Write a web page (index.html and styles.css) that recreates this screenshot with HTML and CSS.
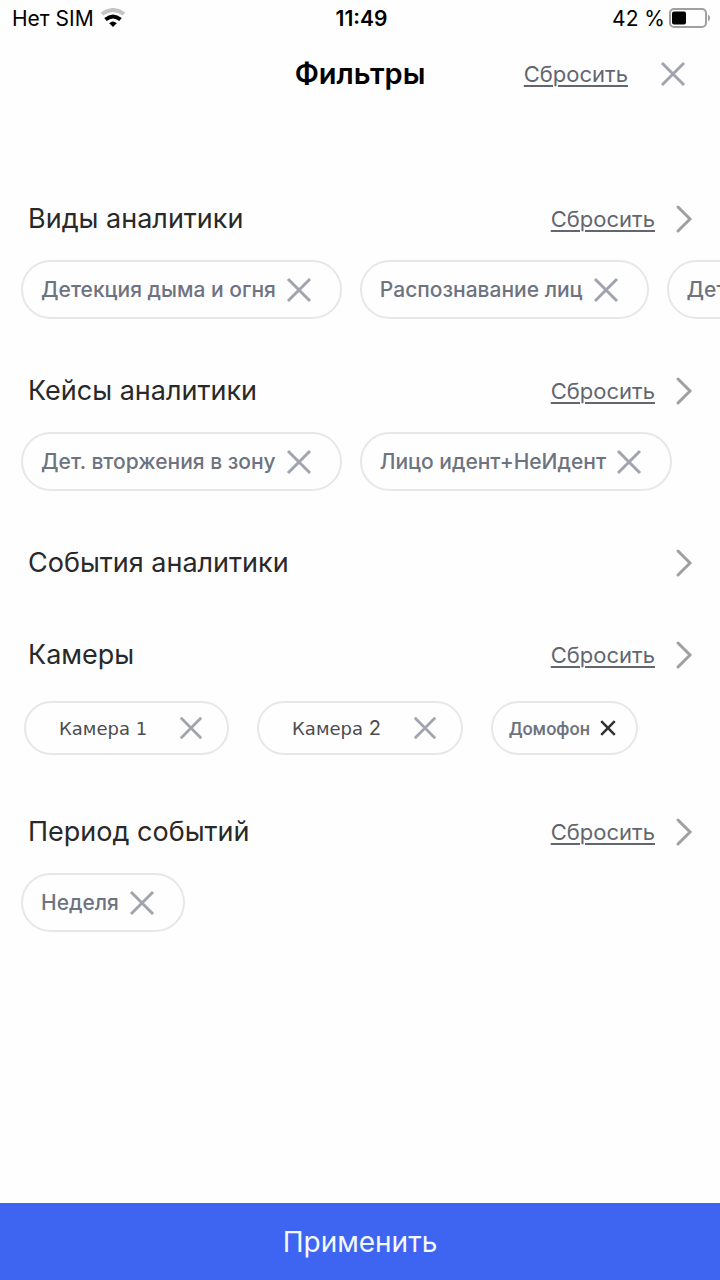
FILE: index.html
```html
<!DOCTYPE html>
<html lang="ru">
<head>
<meta charset="utf-8">
<meta name="viewport" content="width=device-width, initial-scale=1">
<title>Фильтры</title>
<link rel="stylesheet" href="styles.css">
</head>
<body>
<svg class="defs" aria-hidden="true">
  <symbol id="cross" viewBox="0 0 26 26"><path d="M2 2 24 24M24 2 2 24"/></symbol>
  <symbol id="chevron" viewBox="0 0 18 30"><path d="M3 3 15 15 3 27"/></symbol>
</svg>
<div class="screen">
  <div class="status">
    <div class="carrier"><span>Нет SIM</span>
      <svg class="wifi" viewBox="0 0 26 20"><path class="wifi-off" d="M2 6Q13-2 24 6"/><path class="wifi-on" d="M5.500 11.500Q13 5.500 20.500 11.500"/><path d="M13 19 9.200 15.200Q13 12 16.800 15.200Z"/></svg>
    </div>
    <time class="clock">11:49</time>
    <div class="power"><span>42 %</span>
      <svg class="battery" viewBox="0 0 42 20"><rect class="battery-case" x="1" y="1" width="36" height="18" rx="4"/><rect x="3" y="3.500" width="14" height="13" rx="2"/><path class="battery-tip" d="M39 7Q41 7 41 10T39 13Z"/></svg>
    </div>
  </div>
  <header class="topbar">
    <h1 class="title">Фильтры</h1>
    <div class="actions">
      <button class="reset" type="button">Сбросить</button>
      <button class="icon-button" type="button" aria-label="Закрыть"><svg class="cross"><use href="#cross"/></svg></button>
    </div>
  </header>
  <main class="filters">
    <section>
      <div class="heading"><h2>Виды аналитики</h2><button class="reset" type="button">Сбросить</button><button class="icon-button" type="button" aria-label="Открыть виды аналитики"><svg class="chevron"><use href="#chevron"/></svg></button></div>
      <div class="chips">
        <button class="chip" type="button">Детекция дыма и огня<svg class="cross"><use href="#cross"/></svg></button>
        <button class="chip" type="button">Распознавание лиц<svg class="cross"><use href="#cross"/></svg></button>
        <button class="chip" type="button">Детекция<svg class="cross"><use href="#cross"/></svg></button>
      </div>
    </section>
    <section>
      <div class="heading"><h2>Кейсы аналитики</h2><button class="reset" type="button">Сбросить</button><button class="icon-button" type="button" aria-label="Открыть кейсы аналитики"><svg class="chevron"><use href="#chevron"/></svg></button></div>
      <div class="chips">
        <button class="chip" type="button">Дет. вторжения в зону<svg class="cross"><use href="#cross"/></svg></button>
        <button class="chip" type="button">Лицо идент+НеИдент<svg class="cross"><use href="#cross"/></svg></button>
      </div>
    </section>
    <section>
      <div class="heading"><h2>События аналитики</h2><button class="icon-button" type="button" aria-label="Открыть события аналитики"><svg class="chevron"><use href="#chevron"/></svg></button></div>
    </section>
    <section>
      <div class="heading"><h2>Камеры</h2><button class="reset" type="button">Сбросить</button><button class="icon-button" type="button" aria-label="Открыть камеры"><svg class="chevron"><use href="#chevron"/></svg></button></div>
      <div class="chips cameras">
        <button class="chip camera" type="button">Камера 1<svg class="cross"><use href="#cross"/></svg></button>
        <button class="chip camera" type="button"><span>Камера <span class="digit">2</span></span><svg class="cross"><use href="#cross"/></svg></button>
        <button class="chip intercom" type="button">Домофон<svg class="cross"><use href="#cross"/></svg></button>
      </div>
    </section>
    <section>
      <div class="heading"><h2>Период событий</h2><button class="reset" type="button">Сбросить</button><button class="icon-button" type="button" aria-label="Открыть период событий"><svg class="chevron"><use href="#chevron"/></svg></button></div>
      <div class="chips">
        <button class="chip" type="button">Неделя<svg class="cross"><use href="#cross"/></svg></button>
      </div>
    </section>
  </main>
  <button class="apply" type="submit">Применить</button>
</div>
</body>
</html>
```
FILE: styles.css
```css
* { box-sizing: border-box; }
body { margin: 0; background: #fefefe; color: #292929; font-family: Inter, "Liberation Sans", sans-serif; }
button { margin: 0; padding: 0; border: 0; background: none; color: inherit; font: inherit; cursor: pointer; }
h1, h2 { margin: 0; }
svg { display: block; flex: none; }
.defs { position: absolute; width: 0; height: 0; }
.screen { min-height: 100vh; display: flex; flex-direction: column; }

.status { display: grid; grid-template-columns: 1fr auto 1fr; align-items: center; height: 36px; padding: 0 9px 0 12px; color: #000; font-size: 21px; }
.carrier, .power { display: flex; align-items: center; gap: 6px; }
.power { justify-content: flex-end; gap: 4px; }
.clock { font-weight: 600; }
.wifi { width: 26px; height: 20px; }
.wifi-off, .wifi-on { fill: none; stroke: #c4c4c4; stroke-width: 4; }
.wifi-on { stroke: #000; }
.battery { width: 42px; height: 20px; }
.battery-case { fill: none; stroke: #a0a0a0; stroke-width: 2; }
.battery-tip { fill: #a0a0a0; }

.topbar { display: grid; grid-template-columns: 1fr auto 1fr; align-items: center; height: 75px; padding: 0 34px; }
.title { grid-column: 2; color: #000; font-size: 29px; font-weight: 600; }
.actions { display: flex; justify-content: flex-end; align-items: center; gap: 32px; }
.reset { color: #63666f; font-size: 22px; text-decoration: underline; text-decoration-thickness: 2px; text-underline-offset: 3px; }
.cross { width: 26px; height: 26px; fill: none; stroke: #a0a4ae; stroke-width: 3; }
.chevron { width: 18px; height: 30px; fill: none; stroke: #a0a0a0; stroke-width: 3; stroke-linecap: round; }

.filters { flex: 1; display: flex; flex-direction: column; gap: 51px; padding: 87px 0 51px; }
.heading { display: flex; align-items: center; gap: 20px; height: 41px; padding: 0 27px 0 28px; }
.heading h2 { flex: 1; font-size: 27px; font-weight: 400; }
.chips { display: flex; gap: 18px; margin-top: 21px; padding-left: 21px; overflow: hidden; }
.chip { flex: none; display: flex; align-items: center; gap: 10px; height: 59px; padding: 0 28px 0 18px; border: 2px solid #e7e7e9; border-radius: 30px; color: #6e7380; font-size: 21px; font-weight: 500; }
.cameras { align-items: center; gap: 28px; height: 64px; padding-left: 24px; }
.camera { gap: 32px; height: 54px; padding: 0 24px 0 33px; color: #4c4c50; font-family: "DejaVu Sans", sans-serif; font-size: 18px; font-weight: 400; }
.camera .cross { width: 24px; height: 24px; }
.digit { font-family: Inter, sans-serif; font-size: 20px; }
.intercom { gap: 10px; height: 54px; padding: 0 20px 0 16px; font-family: Roboto, sans-serif; font-size: 18px; }
.intercom .cross { width: 16px; height: 16px; stroke: #303030; stroke-width: 4; }

.apply { min-height: 77px; background: #3e64f2; color: #f5f7ff; font-size: 28px; }
```
